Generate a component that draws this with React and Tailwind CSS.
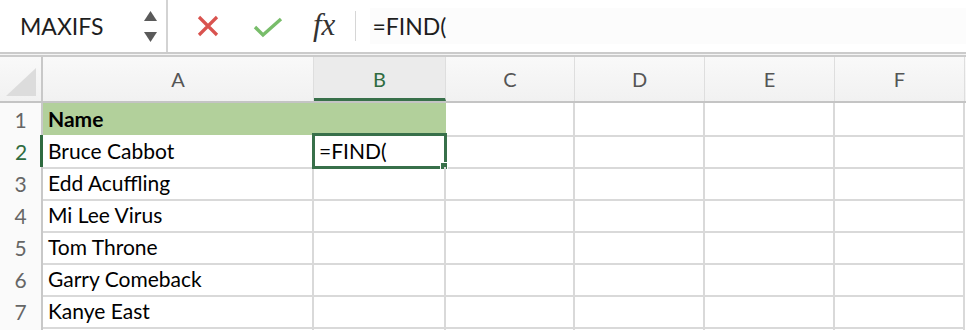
import React from 'react'

const COLS = ['A', 'B', 'C', 'D', 'E', 'F']
const NAMES = ['Name', 'Bruce Cabbot', 'Edd Acuffling', 'Mi Lee Virus', 'Tom Throne', 'Garry Comeback', 'Kanye East', '']

function FormulaBar() {
  return (
    <div className="flex h-[52px] items-stretch">
      <div className="flex w-[168px] items-center justify-between border-r-2 border-[#d3d3d3] pl-[20px] pr-[9px]">
        <span className="text-[23px] text-[#1e1e1e]">MAXIFS</span>
        <div className="flex flex-col gap-[11px]">
          <svg width="13" height="10" viewBox="0 0 13 10"><polygon points="6.5,0 13,10 0,10" fill="#5a5a5a" /></svg>
          <svg width="13" height="10" viewBox="0 0 13 10"><polygon points="0,0 13,0 6.5,10" fill="#5a5a5a" /></svg>
        </div>
      </div>
      <div className="flex items-center pl-[29px]">
        <svg width="22" height="22" viewBox="0 0 22 22">
          <path d="M2 2 L20 20 M20 2 L2 20" stroke="#d9534f" strokeWidth="3.2" />
        </svg>
        <svg className="ml-[34px] mt-[2px]" width="30" height="22" viewBox="0 0 30 22">
          <path d="M2 11 L10 19 L28 3" fill="none" stroke="#78bd6a" strokeWidth="3.4" />
        </svg>
        <span className="ml-[30px] mb-[2px] font-['Liberation_Serif'] text-[31px] italic text-[#333]">fx</span>
        <div className="ml-[20px] h-[30px] w-px bg-[#d6d6d6]" />
      </div>
      <div className="my-[8px] ml-[14px] flex flex-1 items-center bg-[#fcfcfc] pl-[2px] text-[23px] text-[#1e1e1e]">
        =FIND(
      </div>
    </div>
  )
}

function HeaderRow() {
  return (
    <div className="grid h-[46px] grid-cols-[43px_271px_132px_129px_130px_130px_130px] border-b-2 border-[#c4c4c4] bg-gradient-to-b from-[#f9f9f9] to-[#f1f1f1]">
      <div className="flex items-end justify-end border-r-2 border-[#c8c8c8] pb-[5px] pr-[5px]">
        <svg width="30" height="28" viewBox="0 0 30 28"><polygon points="30,0 30,28 0,28" fill="#dcdcdc" /></svg>
      </div>
      {COLS.map(c => (
        <div
          key={c}
          className={
            c === 'B'
              ? 'flex items-center justify-center border-r border-[#dedede] border-b-[3px] border-b-[#38704a] bg-[#ebebeb] pt-[3px] text-[20px] text-[#2f6b40]'
              : 'flex items-center justify-center border-r border-[#dedede] text-[20px] text-[#555]'
          }
        >
          {c}
        </div>
      ))}
    </div>
  )
}

function Row({ n, name }) {
  const header = n === 1
  const active = n === 2
  return (
    <div className="grid h-[32px] grid-cols-[43px_271px_132px_129px_130px_130px_130px]">
      <div
        className={
          active
            ? 'flex items-center justify-center border-r-[3px] border-[#2f6b40] bg-[#fafafa] pl-[2px] text-[21px] text-[#2f6b40]'
            : 'flex items-center justify-center border-r-2 border-[#c8c8c8] bg-[#fafafa] text-[21px] text-[#666]'
        }
      >
        {n < 8 ? n : ''}
      </div>
      <div className={header ? 'flex items-center border-b-2 border-white bg-[#b2d09b] pl-[5px] text-[21px] font-bold text-black' : 'flex items-center border-r-2 border-b-2 border-[#d9d9d9] pl-[5px] text-[21px] text-black'}>
        {name}
      </div>
      <div className={header ? 'border-b-2 border-white bg-[#b2d09b]' : 'relative border-r-2 border-b-2 border-[#d9d9d9]'}>
        {active && (
          <div className="absolute -left-[2px] -top-[2px] flex h-[36px] w-[135px] items-center border-[3px] border-[#38704a] bg-white pl-[4px] text-[21px] text-black">
            =FIND(
            <div className="absolute -bottom-[4px] -right-[4px] h-[8px] w-[8px] border border-white bg-[#38704a]" />
          </div>
        )}
      </div>
      {[0, 1, 2, 3].map(i => (
        <div key={i} className="border-r-2 border-b-2 border-[#d9d9d9]" />
      ))}
    </div>
  )
}

export default function App() {
  return (
    <div className="h-[330px] w-[966px] overflow-hidden bg-white font-['Lato',sans-serif]">
      <FormulaBar />
      <div className="h-[5px] border-y-2 border-[#cbcbcb] bg-[#f4f4f4]" />
      <HeaderRow />
      {NAMES.map((name, i) => (
        <Row key={i} n={i + 1} name={name} />
      ))}
    </div>
  )
}
